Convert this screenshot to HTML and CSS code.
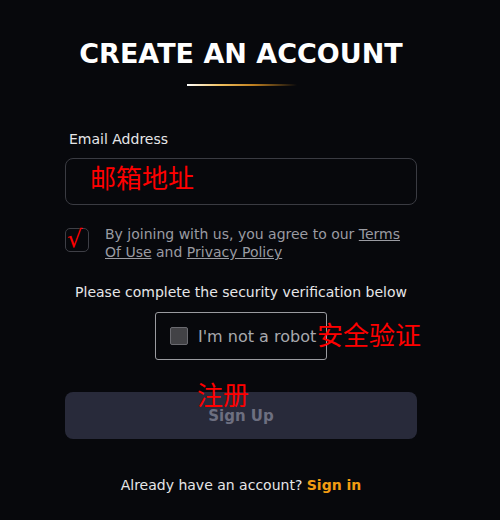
FILE: index.html
```html
<!DOCTYPE html>
<html lang="en">
<head>
  <meta charset="UTF-8">
  <meta name="viewport" content="width=device-width, initial-scale=1.0">
  <title>Create an account</title>
  <link rel="stylesheet" href="styles.css">
</head>
<body>
  <div class="page">
    <h1>CREATE AN ACCOUNT</h1>
    <div class="title-line"></div>

    <form class="signup">
      <label class="field-label" for="email">Email Address</label>
      <div class="field">
        <input id="email" type="email">
        <span class="note note-email">邮箱地址</span>
      </div>

      <div class="agree">
        <span class="check"><span class="tick">√</span></span>
        <p>By joining with us, you agree to our <a href="#">Terms</a><br><a href="#">Of Use</a> and <a href="#">Privacy Policy</a></p>
      </div>

      <p class="verify-text">Please complete the security verification below</p>
      <div class="captcha-row">
        <div class="captcha">
          <span class="captcha-box"></span>
          <span>I'm not a robot</span>
          <span class="note note-captcha">安全验证</span>
        </div>
      </div>

      <div class="submit-wrap">
        <button type="submit" disabled>Sign Up</button>
        <span class="note note-submit">注册</span>
      </div>
    </form>

    <p class="signin">Already have an account? <a href="#">Sign in</a></p>
  </div>
</body>
</html>
```

FILE: styles.css
```css
body {
  margin: 0;
  background: #07080c;
  font-family: "DejaVu Sans", sans-serif;
  color: #e6e6e8;
}
.page {
  width: 352px;
  margin-left: 65px;
  padding-top: 37px;
}
h1 {
  margin: 0;
  text-align: center;
  font-size: 27px;
  line-height: 34px;
  font-weight: bold;
  color: #fff;
}
.title-line {
  width: 110px;
  height: 2px;
  margin: 13px auto 0 122px;
  background: linear-gradient(90deg, #fff 0%, #f0c060 30%, #c08020 60%, rgba(7,8,12,0) 100%);
}
.signup {
  margin-top: 44px;
}
.field-label {
  display: block;
  margin-left: 4px;
  font-size: 14px;
  line-height: 18px;
  font-weight: 500;
  color: #e6e6e8;
}
.field {
  position: relative;
  margin-top: 10px;
}
.field input {
  display: block;
  box-sizing: border-box;
  width: 100%;
  height: 47px;
  background: transparent;
  border: 1px solid #3a3b42;
  border-radius: 8px;
}
.note {
  position: absolute;
  font-family: "Noto Sans CJK SC", sans-serif;
  font-size: 26px;
  line-height: 26px;
  color: #ff0000;
  white-space: nowrap;
}
.note-email {
  left: 25px;
  top: 6px;
}
.agree {
  display: flex;
  gap: 16px;
  margin-top: 20px;
}
.check {
  flex: none;
  width: 22px;
  height: 22px;
  margin-top: 3px;
  border: 1px solid #3e3f46;
  border-radius: 5px;
  position: relative;
}
.tick {
  position: absolute;
  left: 1px;
  top: -3px;
  color: #ff0000;
  font-size: 24px;
  line-height: 26px;
}
.agree p {
  margin: 0;
  font-size: 14px;
  line-height: 18px;
  color: #9a9ba2;
}
.agree a {
  color: #9a9ba2;
}
.verify-text {
  margin: 22px 0 0;
  text-align: center;
  font-size: 14px;
  line-height: 18px;
  color: #e6e6e8;
}
.captcha-row {
  display: flex;
  justify-content: center;
  margin-top: 11px;
}
.captcha {
  position: relative;
  display: flex;
  align-items: center;
  gap: 10px;
  box-sizing: border-box;
  width: 172px;
  height: 48px;
  padding-left: 14px;
  border: 1px solid #9a9ba0;
  border-radius: 3px;
  font-size: 16px;
  color: #a8a9ae;
  white-space: nowrap;
}
.captcha-box {
  flex: none;
  width: 16px;
  height: 16px;
  background: #424246;
  border: 1px solid #6a6a70;
  border-radius: 2px;
}
.note-captcha {
  left: 161px;
  top: 8px;
}
.submit-wrap {
  position: relative;
  margin-top: 32px;
}
.submit-wrap button {
  display: block;
  width: 100%;
  height: 47px;
  border: none;
  border-radius: 8px;
  background: #282a3a;
  color: #6d6f80;
  font-family: inherit;
  font-size: 15px;
  font-weight: bold;
}
.note-submit {
  left: 132px;
  top: -11px;
}
.signin {
  margin: 37px 0 0;
  text-align: center;
  font-size: 14px;
  line-height: 18px;
  color: #e6e6e8;
}
.signin a {
  color: #f39c12;
  font-weight: bold;
  text-decoration: none;
}
```
